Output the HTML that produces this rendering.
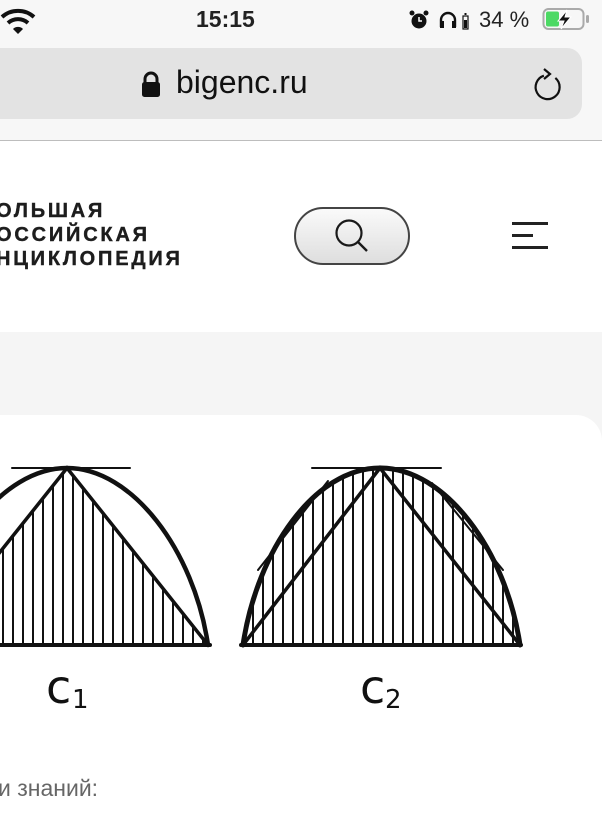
<!DOCTYPE html>
<html><head><meta charset="utf-8"><style>
html,body{margin:0;padding:0;width:602px;height:825px;overflow:hidden;background:#fff;font-family:"Liberation Sans",sans-serif;position:relative}
.abs{position:absolute}
</style></head><body>
<div class="abs" style="left:0;top:0;width:602px;height:140px;background:#f7f7f7"></div>
<div class="abs" style="left:0;top:140px;width:602px;height:1px;background:#bdbdbd"></div>
<svg class="abs" style="left:0;top:6px" width="40" height="30" viewBox="0 0 40 30">
<path d="M2 11 A24 24 0 0 1 34 11" stroke="#111" stroke-width="4" fill="none"/>
<path d="M8 17 A15 15 0 0 1 28 17" stroke="#111" stroke-width="4" fill="none"/>
<path d="M13 23 L18 28 L23 23 A7 7 0 0 0 13 23Z" fill="#111"/>
</svg>
<div class="abs" style="left:196px;top:6px;font-size:23px;font-weight:bold;color:#222">15:15</div>
<svg class="abs" style="left:408px;top:9px" width="22" height="22" viewBox="0 0 22 22"><circle cx="11" cy="12" r="7.5" fill="#111"/><circle cx="4" cy="4" r="2.5" fill="#111"/><circle cx="18" cy="4" r="2.5" fill="#111"/><path d="M11 8 V12 H14" stroke="#fff" stroke-width="1.5" fill="none"/></svg>
<svg class="abs" style="left:438px;top:9px" width="36" height="22" viewBox="0 0 36 22"><path d="M3 18 V11 A7 7 0 0 1 17 11 V18" stroke="#111" stroke-width="2.4" fill="none"/><rect x="2" y="12" width="4" height="7" fill="#111"/><rect x="14" y="12" width="4" height="7" fill="#111"/><rect x="25" y="7" width="5" height="13" fill="none" stroke="#111" stroke-width="1.2"/><rect x="26" y="11" width="3" height="8" fill="#111"/><rect x="26.5" y="4" width="2" height="2" fill="#111"/></svg>
<div class="abs" style="left:479px;top:7px;font-size:22px;color:#222">34 %</div>
<svg class="abs" style="left:542px;top:7px" width="50" height="26" viewBox="0 0 50 26"><rect x="1.5" y="2" width="40" height="20" rx="5" fill="none" stroke="#aaa" stroke-width="2"/><rect x="4" y="4.5" width="13" height="15" rx="2" fill="#4cd964"/><path d="M25 3 L16 14 H22 L19 22 L29 10 H23 Z" fill="#111" stroke="#fff" stroke-width="1"/><rect x="44" y="8" width="3" height="8" rx="1.5" fill="#aaa"/></svg>
<div class="abs" style="left:-20px;top:48px;width:602px;height:71px;background:#e3e3e3;border-radius:15px"></div>
<svg class="abs" style="left:140px;top:70px" width="22" height="30" viewBox="0 0 22 30"><path d="M5 13 V9 A6 6 0 0 1 17 9 V13" stroke="#111" stroke-width="3" fill="none"/><rect x="2" y="12" width="18" height="15" rx="2.5" fill="#111"/></svg>
<div class="abs" style="left:176px;top:64px;font-size:32px;color:#111">bigenc.ru</div>
<svg class="abs" style="left:530px;top:66px" width="36" height="38" viewBox="0 0 36 38"><path d="M18 9 A12 12 0 1 0 28 15" stroke="#111" stroke-width="2.2" fill="none" transform="rotate(-20 18 21)"/><path d="M14 3 L20 8 L14 13" stroke="#111" stroke-width="2.2" fill="none"/></svg>
<div class="abs" style="left:-4px;top:199px;font-size:20px;font-weight:bold;line-height:24px;color:#1d1d1d;letter-spacing:2.8px;-webkit-text-stroke:0.4px #1d1d1d">ОЛЬШАЯ<br>ОССИЙСКАЯ<br>НЦИКЛОПЕДИЯ</div>
<div class="abs" style="left:294px;top:207px;width:112px;height:54px;border:2px solid #444;border-radius:29px;background:linear-gradient(#fafafa,#dedede)"></div>
<svg class="abs" style="left:330px;top:214px" width="46" height="46" viewBox="0 0 46 46"><circle cx="19" cy="19" r="12.5" stroke="#1a1a1a" stroke-width="2.2" fill="none"/><path d="M28 28 L37 37" stroke="#1a1a1a" stroke-width="2.4"/></svg>
<div class="abs" style="left:512px;top:222px;width:36px;height:3px;background:#222"></div>
<div class="abs" style="left:512px;top:234px;width:21px;height:3px;background:#222"></div>
<div class="abs" style="left:512px;top:246px;width:36px;height:3px;background:#222"></div>
<div class="abs" style="left:0;top:332px;width:602px;height:420px;background:#f5f5f5"></div>
<div class="abs" style="left:-30px;top:415px;width:632px;height:420px;background:#fff;border-radius:0 26px 0 0"></div>
<svg class="abs" style="left:0;top:415px" width="602" height="330" viewBox="0 415 602 330">
<defs>
<pattern id="h" x="2" y="0" width="10" height="10" patternUnits="userSpaceOnUse"><rect x="0" y="0" width="2" height="10" fill="#111"/></pattern>
<clipPath id="c1"><path d="M-74 645 L67 468 L208 645Z"/></clipPath>
<clipPath id="c2"><path d="M243 645 C257 550 315 468 380 468 C445 468 506 550 520 645Z"/></clipPath>
</defs>
<rect x="-80" y="460" width="300" height="190" fill="url(#h)" clip-path="url(#c1)"/>
<rect x="230" y="460" width="300" height="190" fill="url(#h)" clip-path="url(#c2)"/>
<g stroke="#111" fill="none" stroke-linecap="round">
<path d="M12 468 H130" stroke-width="2"/>
<path d="M0 645 H210" stroke-width="4"/>
<path d="M-74 645 C-60 550 2 468 67 468 C132 468 194 550 208 645" stroke-width="4.5"/>
<path d="M-74 645 L67 468 L208 645" stroke-width="3.5"/>
<path d="M312 468 H441" stroke-width="2"/>
<path d="M241 645 H521" stroke-width="4"/>
<path d="M243 645 C257 550 315 468 380 468 C445 468 506 550 520 645" stroke-width="5"/>
<path d="M243 645 L380 468 L520 645" stroke-width="3.5"/>
<path d="M258 570 L328 481" stroke-width="2"/>
<path d="M432 483 L503 570" stroke-width="2"/>
</g>
<text x="46" y="703" font-family="DejaVu Sans, sans-serif" font-size="46" fill="#111">c</text>
<text x="72" y="708" font-family="DejaVu Sans, sans-serif" font-size="26" fill="#111">1</text>
<text x="360" y="703" font-family="DejaVu Sans, sans-serif" font-size="46" fill="#111">c</text>
<text x="385" y="708" font-family="DejaVu Sans, sans-serif" font-size="26" fill="#111">2</text>
</svg>
<div class="abs" style="left:-2px;top:775px;font-size:23px;color:#666">и знаний:</div>
</body></html>
